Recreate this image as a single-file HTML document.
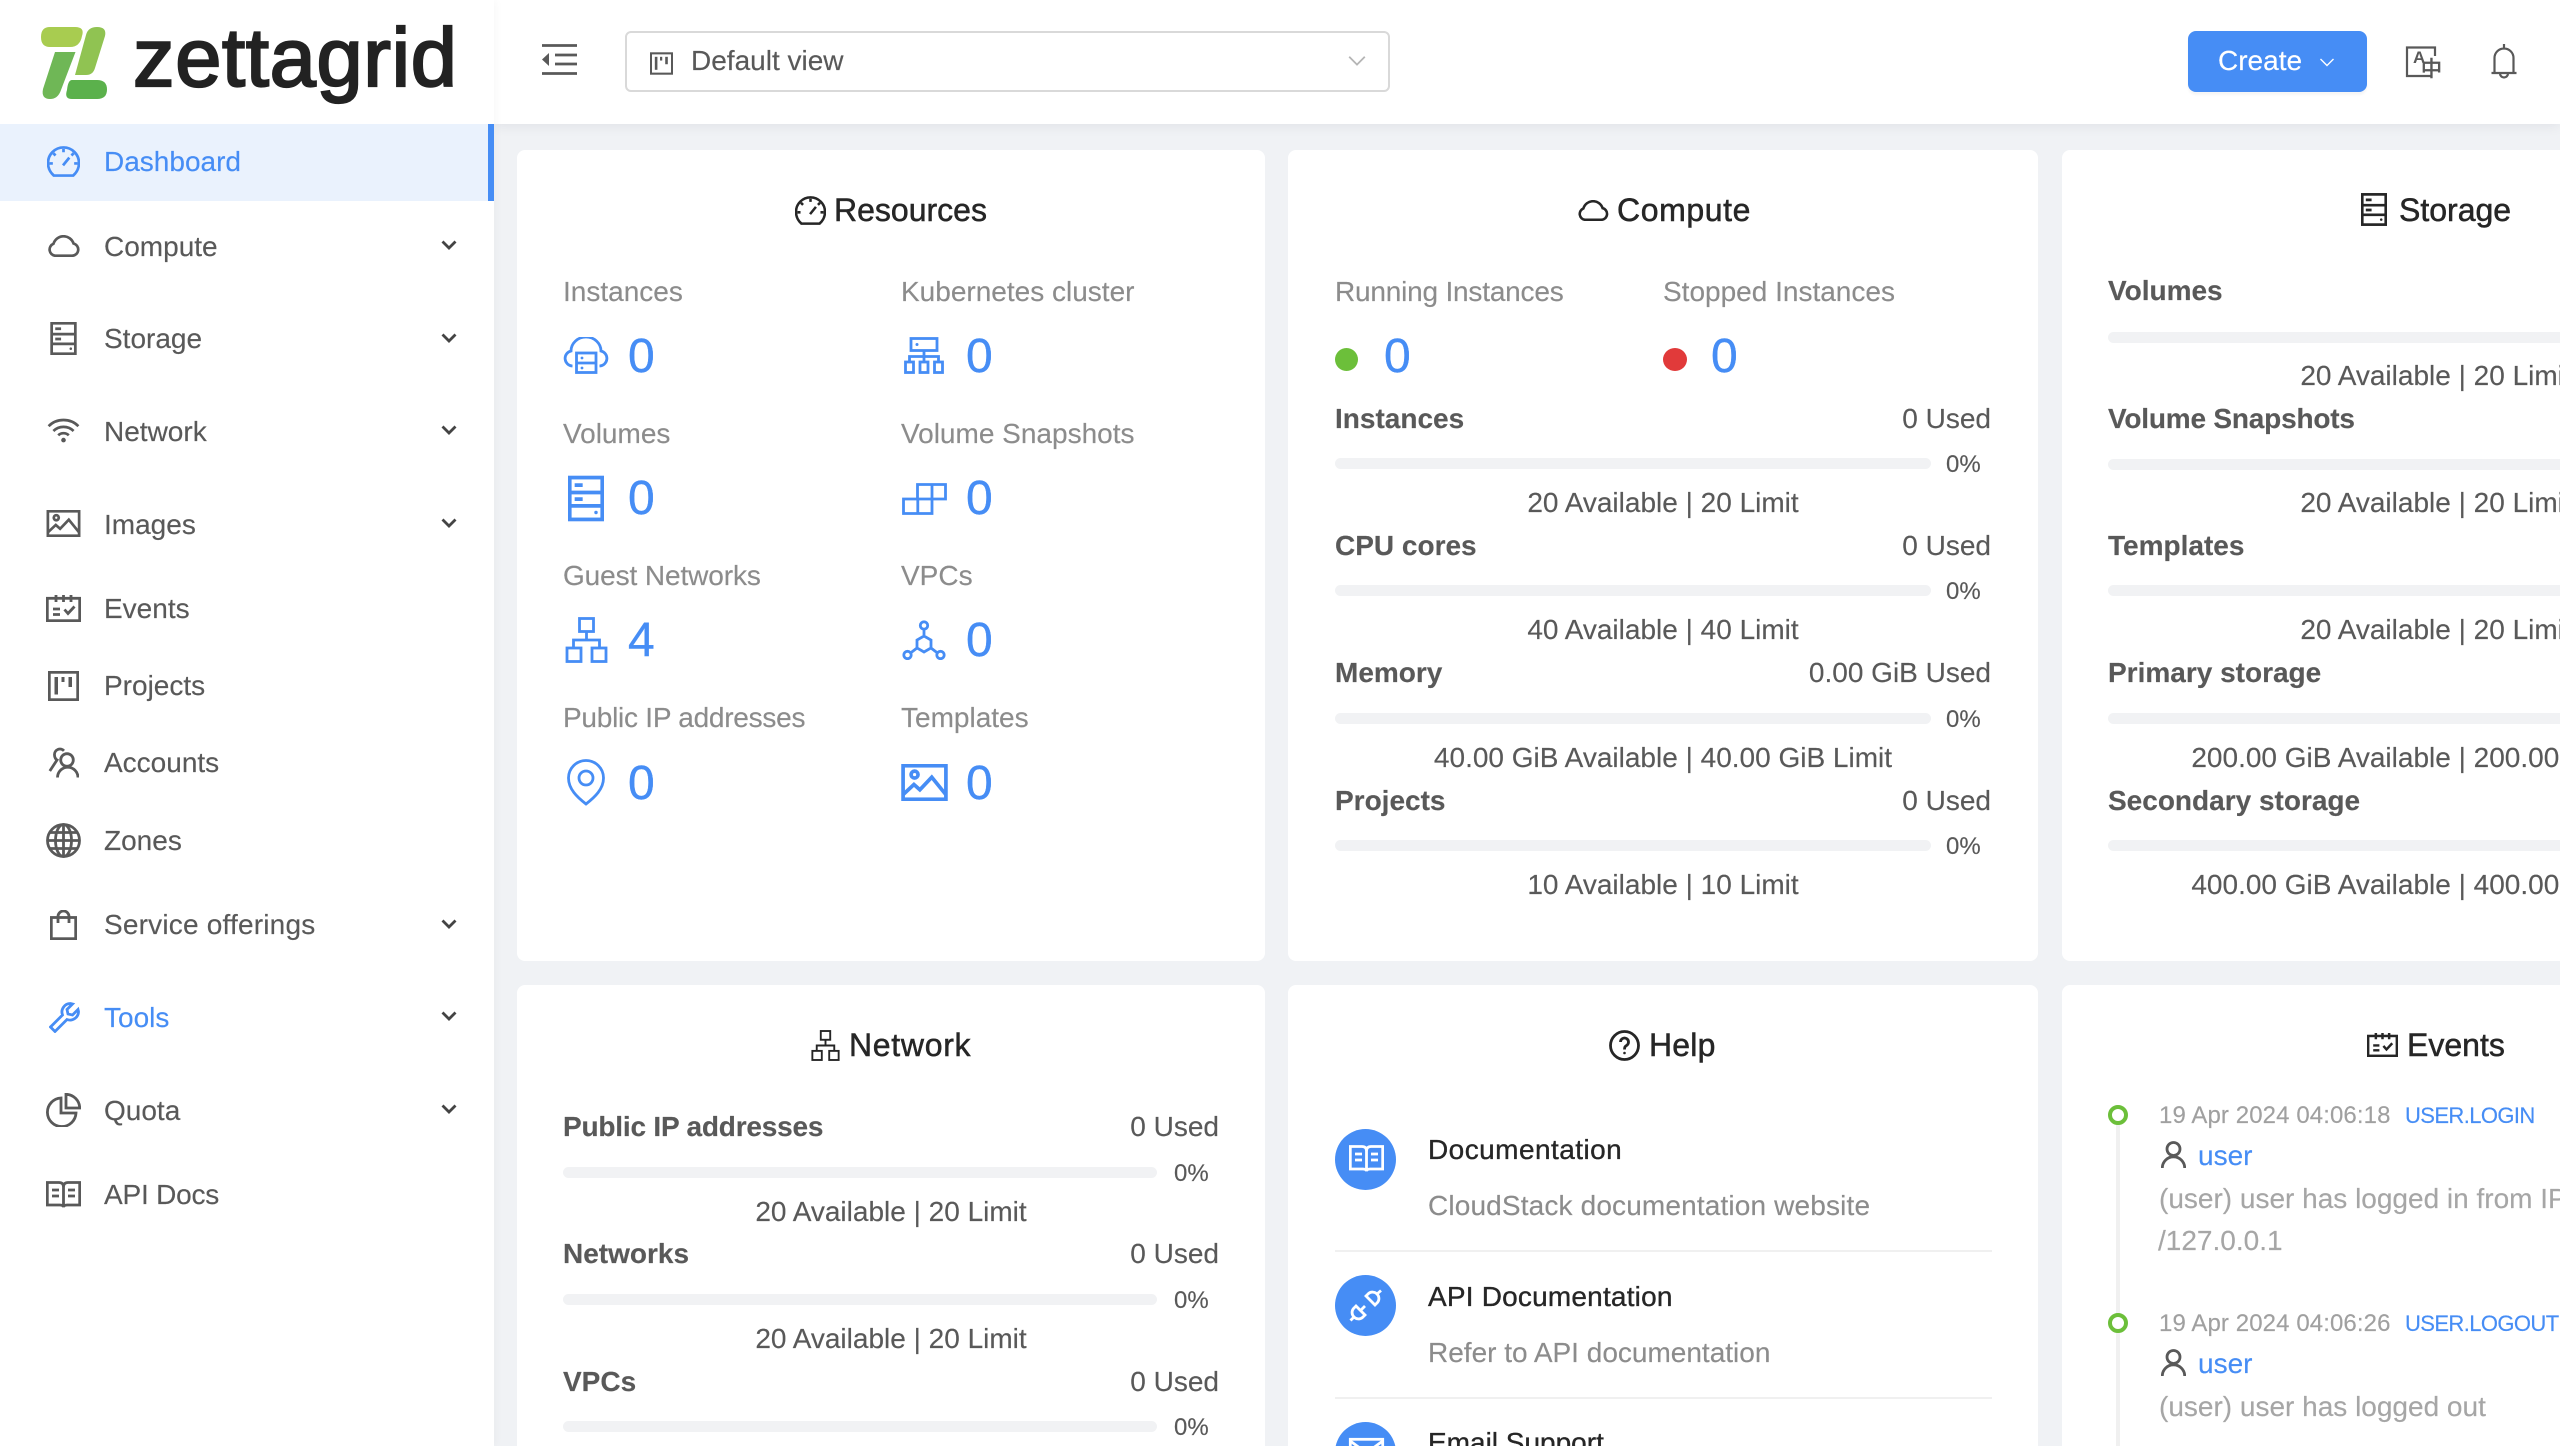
<!DOCTYPE html>
<html><head><meta charset="utf-8"><title>Dashboard</title>
<style>
html,body{margin:0;padding:0;width:2560px;height:1446px;overflow:hidden;background:#f0f2f5}
body{position:relative;font-family:"Liberation Sans","Noto Sans CJK SC",sans-serif;font-size:28px;color:#595959;-webkit-text-stroke:.15px}
#root{position:absolute;left:0;top:0;width:2560px;height:1446px;overflow:hidden;background:#f0f2f5}
.b{position:absolute;box-sizing:border-box}
.t{position:absolute;line-height:40px;white-space:nowrap}
.c{position:absolute;background:#fff;border-radius:8px}
.i{position:absolute;overflow:visible;fill:none;stroke:currentColor;stroke-width:2.8}
.h{font-size:32px;color:#262626;-webkit-text-stroke:.5px #262626}
.l{color:#8c8c8c}
.v{font-size:48px;color:#468df5;-webkit-text-stroke:.4px #468df5}
.m{font-weight:bold}
.p{font-size:24px}
.bar{position:absolute;height:11px;background:#f1f2f4;border-radius:6px}
.a{text-align:center}
.hl{color:#262626;-webkit-text-stroke:.35px #262626}
.u{color:#a6a6a6}
.blue{color:#468df5}
.tm{font-size:24px;color:#a0a0a0;letter-spacing:.1px}
.ev{font-size:22px;color:#468df5;letter-spacing:-.6px}
</style></head><body>
<div id="root">
<svg width="0" height="0" style="position:absolute">
<symbol id="dash" viewBox="0 0 34 32"><path d="M7 30.5H27C31 27 33 22.5 33 17.5A16 16 0 0 0 1 17.5C1 22.5 3 27 7 30.5Z"/><path d="M16.5 20L23 12M17 3V6.5M6.5 7.5L8.8 9.8M27.5 7.5L25.2 9.8M2.5 18H6M28 18H31.5"/></symbol>
<symbol id="cloud" viewBox="0 0 34 23"><path d="M8.5 21.7H26A6.5 6.5 0 0 0 27.5 8.9A11 11 0 0 0 6.5 9.2A6.5 6.5 0 0 0 8.5 21.7Z"/></symbol>
<symbol id="db" viewBox="0 0 27 34"><rect x="1.3" y="1.3" width="24.4" height="31.4"/><path d="M1.3 12.5H25.7M1.3 22.5H25.7M5 7H11M5 17.5H11"/><circle cx="21" cy="27.5" r="1.3" fill="currentColor" stroke="none"/></symbol>
<symbol id="wifi" viewBox="0 0 34 26"><path d="M1.5 8.5A22 22 0 0 1 32.5 8.5M6.5 13.5A15 15 0 0 1 27.5 13.5M11.5 18A8 8 0 0 1 22.5 18"/><circle cx="17" cy="23" r="2.4" fill="currentColor" stroke="none"/></symbol>
<symbol id="pic" viewBox="0 0 35 28"><rect x="1.3" y="1.3" width="32.4" height="25.4"/><circle cx="10" cy="8" r="2.6"/><path d="M1.5 23L9.5 15.5L14 19.5L23 10L33.5 23"/></symbol>
<symbol id="sched" viewBox="0 0 35 27"><rect x="1.3" y="3.3" width="32.4" height="22.4"/><path d="M10 0V7M17.5 0V7M25 0V7M7 14H14M7 19.5H14M18.5 14.5L22 18.5L28.5 11.5"/></symbol>
<symbol id="proj" viewBox="0 0 31 30"><rect x="1.3" y="1.3" width="28.4" height="27.4"/><rect x="6.5" y="6" width="3.5" height="17.5" fill="currentColor" stroke="none"/><rect x="13.5" y="6" width="3" height="5" fill="currentColor" stroke="none"/><rect x="20.5" y="6" width="3.5" height="10" fill="currentColor" stroke="none"/></symbol>
<symbol id="team" viewBox="0 0 31 31"><circle cx="19" cy="13" r="6.3"/><path d="M9.5 30.5A9.8 9.8 0 0 1 30 30.5M16 3.8A5.5 5.5 0 0 0 6.5 8C6.5 10.5 8 12.5 9 13L1.8 24"/></symbol>
<symbol id="globe" viewBox="0 0 35 35"><circle cx="17.5" cy="17.5" r="16"/><ellipse cx="17.5" cy="17.5" rx="8" ry="16"/><path d="M17.5 1.5V33.5M1.5 17.5H33.5M4 9.5H31M4 25.5H31"/></symbol>
<symbol id="bag" viewBox="0 0 27 30"><rect x="1.3" y="7.5" width="24.4" height="21.2"/><path d="M8 13V6.5A5.5 5.5 0 0 1 19 6.5V13"/></symbol>
<symbol id="tool" viewBox="0 0 31 31"><path d="M21.5 1.5A8.5 8.5 0 0 0 13.5 13L1.5 25L6 29.5L18 17.5A8.5 8.5 0 0 0 29.5 9.5L29 7.5L23.5 13L19 12L18 7.5L23.5 2Z"/></symbol>
<symbol id="pie" viewBox="0 0 35 34"><path d="M15 5A14.3 14.3 0 1 0 30 20H15Z"/><path d="M20 1.3A14 14 0 0 1 33.7 15H20Z"/></symbol>
<symbol id="book" viewBox="0 0 35 27"><path d="M1.3 1.5H13Q17.5 1.5 17.5 6Q17.5 1.5 22 1.5H33.7V24H21Q18 24 17.5 26Q17 24 14 24H1.3ZM17.5 6V25M6 9H13M6 15H13M22 9H29M22 15H29"/></symbol>
<symbol id="inst" viewBox="0 0 46 37"><path d="M9.5 29A7.6 7.6 0 0 1 8 14A15 14 0 0 1 38 14A7.6 7.6 0 0 1 36.5 29"/><rect x="13.5" y="16" width="19.5" height="19.5"/><path d="M13.5 26H33"/><circle cx="19" cy="21" r="1.4" fill="currentColor" stroke="none"/><circle cx="19" cy="31" r="1.4" fill="currentColor" stroke="none"/></symbol>
<symbol id="k8s" viewBox="0 0 40 37"><rect x="7" y="1.5" width="26" height="12"/><circle cx="13" cy="7.5" r="1.5" fill="currentColor" stroke="none"/><path d="M20 13.5V25M5.5 25V19.5H34.5V25"/><rect x="1.5" y="25" width="8" height="10.5"/><rect x="16" y="25" width="8" height="10.5"/><rect x="30.5" y="25" width="8" height="10.5"/></symbol>
<symbol id="snap" viewBox="0 0 45 32"><path d="M1.5 16H30V30.5H1.5ZM15.8 16V30.5M15.5 16V1.5H43.5V16H30M30 1.5V16"/></symbol>
<symbol id="net" viewBox="0 0 42 46"><rect x="14" y="1.5" width="14" height="13"/><path d="M21 14.5V23M8 31V23H34V31"/><rect x="1.5" y="31" width="14" height="13.5"/><rect x="26.5" y="31" width="14" height="13.5"/></symbol>
<symbol id="vpc" viewBox="0 0 44 40"><path d="M22 16L29 20V28L22 32L15 28V20ZM22 9V16M15 28L8.5 33M29 28L35.5 33"/><circle cx="22" cy="5.5" r="3.7"/><circle cx="5.5" cy="35" r="3.7"/><circle cx="38.5" cy="35" r="3.7"/></symbol>
<symbol id="pin" viewBox="0 0 38 47"><path d="M19 45C10 38 1.5 30 1.5 19A17.5 17.5 0 0 1 36.5 19C36.5 30 28 38 19 45Z"/><circle cx="19" cy="19" r="7"/></symbol>
<symbol id="chev" viewBox="0 0 16 10"><path d="M1.5 1.5L8 8L14.5 1.5"/></symbol>
<symbol id="user" viewBox="0 0 25 27"><circle cx="12.5" cy="8" r="6.5"/><path d="M1.3 27A11.2 11.2 0 0 1 23.7 27"/></symbol>
<symbol id="q" viewBox="0 0 31 31"><circle cx="15.5" cy="15.5" r="14"/><path d="M11.5 12A4 4 0 1 1 17.5 15.5Q15.5 16.5 15.5 19.5"/><circle cx="15.5" cy="23" r="1.3" fill="currentColor" stroke="none"/></symbol>
</svg>

<!-- main cards -->
<div class="c" style="left:517px;top:150px;width:748px;height:811px"></div>
<div class="c" style="left:1288px;top:150px;width:750px;height:811px"></div>
<div class="c" style="left:2062px;top:150px;width:498px;height:811px;border-radius:8px 0 0 8px"></div>
<div class="c" style="left:517px;top:985px;width:748px;height:461px;border-radius:8px 8px 0 0"></div>
<div class="c" style="left:1288px;top:985px;width:750px;height:461px;border-radius:8px 8px 0 0"></div>
<div class="c" style="left:2062px;top:985px;width:498px;height:461px;border-radius:8px 0 0 0"></div>

<!-- header -->
<div class="b" style="left:494px;top:0;width:2066px;height:124px;background:#fff;box-shadow:0 2px 12px rgba(0,21,41,.07)"></div>
<svg class="i" style="left:542px;top:44px;width:35px;height:31px;color:#595959" viewBox="0 0 35 31"><path d="M0 1.5H35M13 11H35M13 20H35M0 29.5H35"/><path d="M7 9V22L0 15.5Z" fill="currentColor" stroke="none"/></svg>
<div class="b" style="left:625px;top:31px;width:765px;height:61px;border:2px solid #d9d9d9;border-radius:6px;background:#fff"></div>
<svg class="i" style="left:650px;top:52px;width:23px;height:23px;color:#595959"><use href="#proj"/></svg>
<div class="t" style="left:691px;top:41px">Default view</div>
<svg class="i" style="left:1347px;top:55px;width:20px;height:12px;color:#b5b5b5;stroke-width:1.5"><use href="#chev"/></svg>
<div class="b" style="left:2188px;top:31px;width:179px;height:61px;background:#468df5;border-radius:8px;box-shadow:0 3px 2px rgba(0,0,0,.04)"></div>
<div class="t" style="left:2218px;top:41px;color:#fff">Create</div>
<svg class="i" style="left:2319px;top:57px;width:16px;height:11px;color:#fff;stroke-width:1.4"><use href="#chev"/></svg>
<svg class="i" style="left:2406px;top:46px;width:36px;height:32px;color:#595959;stroke-width:2.2" viewBox="0 0 36 32"><path d="M29 10V1.5H1V30H25"/><text x="7" y="17" font-size="17" font-weight="bold" fill="#595959" stroke="none" font-family="Liberation Sans,sans-serif">A</text><text x="15" y="30" font-size="21" fill="#595959" stroke="#595959" stroke-width=".7" font-family="Noto Sans CJK SC,sans-serif">中</text></svg>
<svg class="i" style="left:2491px;top:44px;width:26px;height:35px;color:#595959;stroke-width:2.2" viewBox="0 0 26 35"><path d="M13 0V4M3.5 29V14A9.5 9.5 0 0 1 22.5 14V29M.5 29H25.5M9 29.5A4 4 0 0 0 17 29.5"/></svg>

<!-- sidebar -->
<div class="b" style="left:0;top:0;width:494px;height:1446px;background:#fff;box-shadow:2px 0 8px rgba(0,21,41,.03)"></div>
<svg style="position:absolute;left:0;top:0" width="130" height="124" viewBox="0 0 130 124">
<path d="M50 27H75Q85 27 82 36Q80 47 70 47H50Q41 47 41 37Q41 27 50 27Z" fill="#a8cc50"/>
<path d="M86 35Q88 27 97 27Q107 27 105 36L95 68Q93 75 86 75H75Z" fill="#90c352"/>
<path d="M55 52H75.5L61 90Q58 99 50 99Q41 99 43 89Z" fill="#6fb756"/>
<path d="M72 80H97Q107 80 107 89.5Q107 99 97 99H72Q64 99 67 90Q68 80 72 80Z" fill="#5bb14c"/>
</svg>
<div class="t" style="left:133px;top:10px;font-size:83px;line-height:96px;color:#222;letter-spacing:.7px;-webkit-text-stroke:2.2px #222">zettagrid</div>
<div class="b" style="left:0;top:124px;width:494px;height:77px;background:#eaf2fd"></div>
<div class="b" style="left:488px;top:124px;width:6px;height:77px;background:#468df5"></div>

<svg class="i" style="left:47px;top:146px;width:33px;height:31px;color:#468df5"><use href="#dash"/></svg>
<div class="t blue" style="left:104px;top:142px">Dashboard</div>
<svg class="i" style="left:47px;top:235px;width:33px;height:22px"><use href="#cloud"/></svg>
<div class="t" style="left:104px;top:227px">Compute</div>
<svg class="i" style="left:441px;top:240px;width:16px;height:10px;color:#444"><use href="#chev"/></svg>
<svg class="i" style="left:50px;top:322px;width:27px;height:33px"><use href="#db"/></svg>
<div class="t" style="left:104px;top:319px">Storage</div>
<svg class="i" style="left:441px;top:333px;width:16px;height:10px;color:#444"><use href="#chev"/></svg>
<svg class="i" style="left:47px;top:418px;width:33px;height:25px"><use href="#wifi"/></svg>
<div class="t" style="left:104px;top:412px">Network</div>
<svg class="i" style="left:441px;top:425px;width:16px;height:10px;color:#444"><use href="#chev"/></svg>
<svg class="i" style="left:46px;top:510px;width:35px;height:27px"><use href="#pic"/></svg>
<div class="t" style="left:104px;top:505px">Images</div>
<svg class="i" style="left:441px;top:518px;width:16px;height:10px;color:#444"><use href="#chev"/></svg>
<svg class="i" style="left:46px;top:595px;width:35px;height:27px"><use href="#sched"/></svg>
<div class="t" style="left:104px;top:589px">Events</div>
<svg class="i" style="left:48px;top:671px;width:31px;height:30px"><use href="#proj"/></svg>
<div class="t" style="left:104px;top:666px">Projects</div>
<svg class="i" style="left:48px;top:747px;width:31px;height:31px"><use href="#team"/></svg>
<div class="t" style="left:104px;top:743px">Accounts</div>
<svg class="i" style="left:46px;top:823px;width:35px;height:35px"><use href="#globe"/></svg>
<div class="t" style="left:104px;top:821px">Zones</div>
<svg class="i" style="left:50px;top:910px;width:27px;height:30px"><use href="#bag"/></svg>
<div class="t" style="left:104px;top:905px;letter-spacing:.2px">Service offerings</div>
<svg class="i" style="left:441px;top:919px;width:16px;height:10px;color:#444"><use href="#chev"/></svg>
<svg class="i" style="left:49px;top:1002px;width:31px;height:31px;color:#468df5"><use href="#tool"/></svg>
<div class="t blue" style="left:104px;top:998px">Tools</div>
<svg class="i" style="left:441px;top:1011px;width:16px;height:10px;color:#444"><use href="#chev"/></svg>
<svg class="i" style="left:46px;top:1093px;width:35px;height:34px"><use href="#pie"/></svg>
<div class="t" style="left:104px;top:1091px">Quota</div>
<svg class="i" style="left:441px;top:1104px;width:16px;height:10px;color:#444"><use href="#chev"/></svg>
<svg class="i" style="left:46px;top:1181px;width:35px;height:27px"><use href="#book"/></svg>
<div class="t" style="left:104px;top:1175px;letter-spacing:-.2px">API Docs</div>

<!-- Resources -->
<svg class="i" style="left:795px;top:196px;width:31px;height:29px;color:#262626"><use href="#dash"/></svg>
<div class="t h" style="left:834px;top:190px">Resources</div>
<div class="t l" style="left:563px;top:272px">Instances</div>
<div class="t l" style="left:901px;top:272px">Kubernetes cluster</div>
<svg class="i blue" style="left:563px;top:337px;width:46px;height:37px"><use href="#inst"/></svg>
<div class="t v" style="left:628px;top:337px">0</div>
<svg class="i blue" style="left:904px;top:337px;width:40px;height:37px"><use href="#k8s"/></svg>
<div class="t v" style="left:966px;top:337px">0</div>
<div class="t l" style="left:563px;top:414px">Volumes</div>
<div class="t l" style="left:901px;top:414px">Volume Snapshots</div>
<svg class="i blue" style="left:568px;top:475px;width:36px;height:47px"><use href="#db"/></svg>
<div class="t v" style="left:628px;top:479px">0</div>
<svg class="i blue" style="left:902px;top:483px;width:45px;height:32px"><use href="#snap"/></svg>
<div class="t v" style="left:966px;top:479px">0</div>
<div class="t l" style="left:563px;top:556px;letter-spacing:-.1px">Guest Networks</div>
<div class="t l" style="left:901px;top:556px">VPCs</div>
<svg class="i blue" style="left:565px;top:617px;width:43px;height:46px"><use href="#net"/></svg>
<div class="t v" style="left:628px;top:621px">4</div>
<svg class="i blue" style="left:902px;top:620px;width:44px;height:40px"><use href="#vpc"/></svg>
<div class="t v" style="left:966px;top:621px">0</div>
<div class="t l" style="left:563px;top:698px;letter-spacing:-.25px">Public IP addresses</div>
<div class="t l" style="left:901px;top:698px">Templates</div>
<svg class="i blue" style="left:567px;top:759px;width:38px;height:47px"><use href="#pin"/></svg>
<div class="t v" style="left:628px;top:764px">0</div>
<svg class="i blue" style="left:901px;top:764px;width:47px;height:37px"><use href="#pic"/></svg>
<div class="t v" style="left:966px;top:764px">0</div>

<!-- Compute -->
<svg class="i" style="left:1577px;top:200px;width:32px;height:21px;color:#262626"><use href="#cloud"/></svg>
<div class="t h" style="left:1617px;top:190px;letter-spacing:.6px">Compute</div>
<div class="t l" style="left:1335px;top:272px;letter-spacing:-.2px">Running Instances</div>
<div class="t l" style="left:1663px;top:272px">Stopped Instances</div>
<div class="b" style="left:1335px;top:348px;width:23px;height:23px;border-radius:50%;background:#6cbf3a"></div>
<div class="t v" style="left:1384px;top:337px">0</div>
<div class="b" style="left:1663px;top:348px;width:24px;height:23px;border-radius:50%;background:#e13a3a"></div>
<div class="t v" style="left:1711px;top:337px">0</div>

<div class="t m" style="left:1335px;top:399px">Instances</div><div class="t" style="right:569px;top:399px">0 Used</div>
<div class="bar" style="left:1335px;top:458px;width:596px"></div><div class="t p" style="left:1946px;top:445px">0%</div>
<div class="t a" style="left:1335px;width:656px;top:483px">20 Available | 20 Limit</div>
<div class="t m" style="left:1335px;top:526px">CPU cores</div><div class="t" style="right:569px;top:526px">0 Used</div>
<div class="bar" style="left:1335px;top:585px;width:596px"></div><div class="t p" style="left:1946px;top:572px">0%</div>
<div class="t a" style="left:1335px;width:656px;top:610px">40 Available | 40 Limit</div>
<div class="t m" style="left:1335px;top:653px">Memory</div><div class="t" style="right:569px;top:653px">0.00 GiB Used</div>
<div class="bar" style="left:1335px;top:713px;width:596px"></div><div class="t p" style="left:1946px;top:700px">0%</div>
<div class="t a" style="left:1335px;width:656px;top:738px">40.00 GiB Available | 40.00 GiB Limit</div>
<div class="t m" style="left:1335px;top:781px">Projects</div><div class="t" style="right:569px;top:781px">0 Used</div>
<div class="bar" style="left:1335px;top:840px;width:596px"></div><div class="t p" style="left:1946px;top:827px">0%</div>
<div class="t a" style="left:1335px;width:656px;top:865px">10 Available | 10 Limit</div>

<!-- Storage -->
<svg class="i" style="left:2361px;top:193px;width:26px;height:33px;color:#262626"><use href="#db"/></svg>
<div class="t h" style="left:2399px;top:190px">Storage</div>
<div class="t m" style="left:2108px;top:271px">Volumes</div>
<div class="bar" style="left:2108px;top:332px;width:596px"></div>
<div class="t a" style="left:2108px;width:656px;top:356px">20 Available | 20 Limit</div>
<div class="t m" style="left:2108px;top:399px;letter-spacing:-.2px">Volume Snapshots</div>
<div class="bar" style="left:2108px;top:459px;width:596px"></div>
<div class="t a" style="left:2108px;width:656px;top:483px">20 Available | 20 Limit</div>
<div class="t m" style="left:2108px;top:526px">Templates</div>
<div class="bar" style="left:2108px;top:585px;width:596px"></div>
<div class="t a" style="left:2108px;width:656px;top:610px">20 Available | 20 Limit</div>
<div class="t m" style="left:2108px;top:653px">Primary storage</div>
<div class="bar" style="left:2108px;top:713px;width:596px"></div>
<div class="t a" style="left:2108px;width:656px;top:738px">200.00 GiB Available | 200.00 GiB Limit</div>
<div class="t m" style="left:2108px;top:781px">Secondary storage</div>
<div class="bar" style="left:2108px;top:840px;width:596px"></div>
<div class="t a" style="left:2108px;width:656px;top:865px">400.00 GiB Available | 400.00 GiB Limit</div>

<!-- Network -->
<svg class="i" style="left:811px;top:1030px;width:29px;height:31px;color:#262626"><use href="#net"/></svg>
<div class="t h" style="left:849px;top:1025px;letter-spacing:.7px">Network</div>
<div class="t m" style="left:563px;top:1107px;letter-spacing:-.2px">Public IP addresses</div><div class="t" style="right:1341px;top:1107px">0 Used</div>
<div class="bar" style="left:563px;top:1167px;width:594px"></div><div class="t p" style="left:1174px;top:1154px">0%</div>
<div class="t a" style="left:563px;width:656px;top:1192px">20 Available | 20 Limit</div>
<div class="t m" style="left:563px;top:1234px">Networks</div><div class="t" style="right:1341px;top:1234px">0 Used</div>
<div class="bar" style="left:563px;top:1294px;width:594px"></div><div class="t p" style="left:1174px;top:1281px">0%</div>
<div class="t a" style="left:563px;width:656px;top:1319px">20 Available | 20 Limit</div>
<div class="t m" style="left:563px;top:1362px">VPCs</div><div class="t" style="right:1341px;top:1362px">0 Used</div>
<div class="bar" style="left:563px;top:1421px;width:594px"></div><div class="t p" style="left:1174px;top:1408px">0%</div>

<!-- Help -->
<svg class="i" style="left:1609px;top:1030px;width:31px;height:31px;color:#262626"><use href="#q"/></svg>
<div class="t h" style="left:1649px;top:1025px;letter-spacing:.2px">Help</div>
<div class="b" style="left:1335px;top:1129px;width:61px;height:61px;border-radius:50%;background:#468df5"></div>
<svg class="i" style="left:1349px;top:1145px;width:35px;height:27px;color:#fff"><use href="#book"/></svg>
<div class="t hl" style="left:1428px;top:1130px;letter-spacing:.45px">Documentation</div>
<div class="t l" style="left:1428px;top:1186px;letter-spacing:.15px">CloudStack documentation website</div>
<div class="b" style="left:1335px;top:1250px;width:657px;height:2px;background:#f0f0f0"></div>
<div class="b" style="left:1335px;top:1275px;width:61px;height:61px;border-radius:50%;background:#468df5"></div>
<svg class="i" style="left:1350px;top:1290px;width:32px;height:31px;color:#fff" viewBox="0 0 32 31"><path d="M6 16L15 25L12.5 27.5A6.4 6.4 0 0 1 3.5 18.5ZM16 6L25 15L27.5 12.5A6.4 6.4 0 0 0 18.5 3.5ZM27 4L31 .5M4 27L.5 30.5M10.5 20.5L15 16"/></svg>
<div class="t hl" style="left:1428px;top:1277px;letter-spacing:.2px">API Documentation</div>
<div class="t l" style="left:1428px;top:1333px">Refer to API documentation</div>
<div class="b" style="left:1335px;top:1397px;width:657px;height:2px;background:#f0f0f0"></div>
<div class="b" style="left:1335px;top:1422px;width:61px;height:61px;border-radius:50%;background:#468df5"></div>
<svg class="i" style="left:1349px;top:1438px;width:35px;height:26px;color:#fff" viewBox="0 0 35 26"><rect x="1.3" y="1.3" width="32.4" height="23.4"/><path d="M1.3 3L17.5 15L33.7 3"/></svg>
<div class="t hl" style="left:1428px;top:1423px">Email Support</div>

<!-- Events -->
<svg class="i" style="left:2367px;top:1033px;width:31px;height:24px;color:#262626"><use href="#sched"/></svg>
<div class="t h" style="left:2407px;top:1025px">Events</div>
<div class="b" style="left:2116px;top:1120px;width:4px;height:326px;background:#f0f0f0"></div>
<div class="b" style="left:2108px;top:1105px;width:20px;height:20px;border-radius:50%;border:4px solid #6cbf3a;background:#fff"></div>
<div class="b" style="left:2108px;top:1313px;width:20px;height:20px;border-radius:50%;border:4px solid #6cbf3a;background:#fff"></div>
<div class="t tm" style="left:2159px;top:1096px">19 Apr 2024 04:06:18</div>
<div class="t ev" style="left:2405px;top:1096px">USER.LOGIN</div>
<svg class="i" style="left:2161px;top:1141px;width:25px;height:27px"><use href="#user"/></svg>
<div class="t blue" style="left:2198px;top:1136px">user</div>
<div class="t u" style="left:2159px;top:1179px">(user) user has logged in from IP</div>
<div class="t u" style="left:2158px;top:1221px">/127.0.0.1</div>
<div class="t tm" style="left:2159px;top:1304px">19 Apr 2024 04:06:26</div>
<div class="t ev" style="left:2405px;top:1304px">USER.LOGOUT</div>
<svg class="i" style="left:2161px;top:1349px;width:25px;height:27px"><use href="#user"/></svg>
<div class="t blue" style="left:2198px;top:1344px">user</div>
<div class="t u" style="left:2159px;top:1387px">(user) user has logged out</div>
</div>
</body></html>
